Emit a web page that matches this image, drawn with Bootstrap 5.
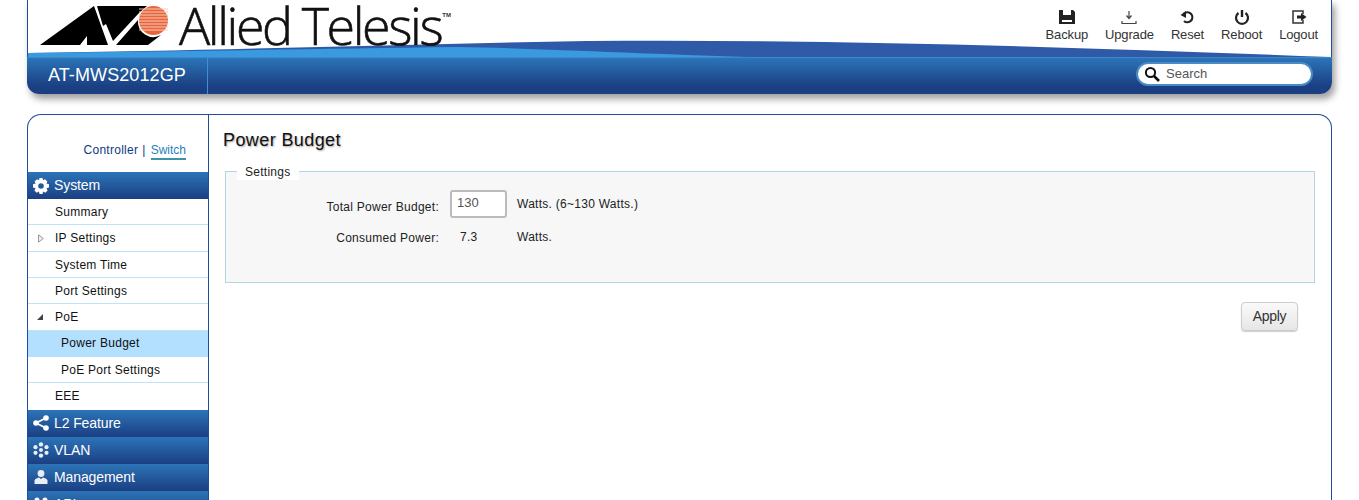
<!DOCTYPE html>
<html lang="en">
<head>
    <meta charset="UTF-8">
    <title>Power Budget</title>
    <link href="https://cdn.jsdelivr.net/npm/bootstrap@5.3.0/dist/css/bootstrap.min.css" rel="stylesheet">
    <style>
        html, body { height: 500px; overflow: hidden; }
        body { background: #fff; font-family: "Liberation Sans", Arial, sans-serif; font-size: 12px; letter-spacing: .27px; color: #222; padding: 0 27px; }
        .app-head { border-radius: 0 0 12px 12px; box-shadow: 3px 5px 7px rgba(0,0,0,.38); margin-bottom: 20px; height: 94px; }
        .head-top { height: 57px; border-left: 1px solid #1f4e9e; border-right: 1px solid #1f4e9e; position: relative; }
        .swoosh { position: absolute; left: 0; top: 0; width: 100%; height: 57px; }
        .brand { position: relative; height: 50px; padding-left: 8px; }
        .brand-name { font-family: "Open Sans", sans-serif; font-weight: 300; font-size: 52px; line-height: 50px; letter-spacing: -2.4px; color: #111; -webkit-text-stroke: .6px #111; margin-left: 9px; white-space: nowrap; }
        .brand-tm { font-size: 6px; font-weight: 700; letter-spacing: 0; margin: 11px 0 0 1px; color: #333; }
        .tools { position: relative; padding-right: 13px; gap: 17px; padding-top: 8px; }
        .tool { color: #333; font-size: 13px; line-height: 15px; letter-spacing: -.15px; text-decoration: none; text-align: center; }
        .tool svg { display: block; margin: 0 auto 1px; width: 18px; height: 18px; }
        .head-bar { height: 37px; background: linear-gradient(#2c74b8, #1a3f82 80%); border-radius: 0 0 12px 12px; border-top: 1px solid #3d88c8; }
        .model { width: 181px; height: 36px; border-right: 1px solid #3f8fd6; color: #fff; font-size: 18px; letter-spacing: .1px; line-height: 34px; padding-left: 21px; }
        .search-box { width: 177px; height: 24px; background: #fff; border: 2px solid #4a8ac6; border-radius: 12px; margin-right: 19px; padding-left: 6px; gap: 6px; color: #555; font-size: 13px; letter-spacing: 0; }
        .main-panel { height: 386px; border: 1px solid #1f4e9e; border-bottom: 0; border-radius: 14px 14px 0 0; overflow: hidden; }
        .side { width: 181px; border-right: 1px solid #1f4e9e; flex: none; }
        .zone { height: 57px; text-align: right; padding: 27px 22px 0 0; color: #0d3a80; line-height: 17px; }
        .zone-sep { margin: 0 5px 0 4px; }
        .zone a { color: #2a7fb8; letter-spacing: 0; text-decoration: none; border-bottom: 2px solid #3f93a8; padding-bottom: 1px; }
        .group-head { height: 27px; background: linear-gradient(#2c74b8, #1a3f82); color: #fff; font-size: 14px; letter-spacing: -.1px; line-height: 27px; padding-left: 5px; gap: 5px; }
        .group-head svg { width: 16px; height: 16px; flex: none; }
        .side-item { height: 26.35px; line-height: 27px; color: #111; padding-left: 27px; border-bottom: 1px solid #bfe3f7; position: relative; }
        .side-item.sub { padding-left: 33px; }
        .side-item.active { background: #b3e0ff; border-bottom-color: #b3e0ff; line-height: 25px; }
        .side-item.last { border-bottom: 0; }
        .tri-closed { position: absolute; left: 10px; top: 9px; }
        .tri-open { position: absolute; left: 9px; top: 10px; width: 0; height: 0; border-right: 6px solid #444; border-top: 6px solid transparent; }
        .content-area { padding: 0 16px; }
        .page-title { font-size: 18px; font-weight: 400; letter-spacing: .4px; color: #111; margin: 14px 0 0 -2px; line-height: 22px; text-shadow: 1px 1px 2px rgba(0,0,0,.35); }
        .settings-box { margin: 12px 0 0; height: 120px; width: 1090px; background: #f7f7f7; border: 1px solid #b5d3e6; padding: 0; position: relative; }
        .settings-box legend { float: none; width: auto; font-size: 12px; line-height: 16px; margin: -8px 0 0 11px; padding: 0 8px; background: #fff; color: #222; position: relative; top: 1px; }
        .field-row { height: 34px; }
        .field-row.second { margin-top: -1px; }
        .field-label { width: 213px; text-align: right; flex: none; color: #222; }
        .label-low { padding-top: 6px; }
        .label-nudge { padding-top: 2px; }
        .field-val { width: 57px; margin: 0 10px 0 11px; flex: none; }
        .val-text { padding-left: 10px; }
        .field-input { width: 57px; height: 28px; border: 2px solid #bbb; border-radius: 3px; background: #fff; color: #555; font-size: 13px; letter-spacing: 0; padding: 0 5px 4px; }
        .apply-row { width: 1090px; }
        .apply-btn { width: 57px; height: 29px; margin: 19px 17px 0 0; font-size: 14px; letter-spacing: -.3px; color: #333; border: 1px solid #ccc; border-radius: 4px; background: linear-gradient(#fafafa, #e6e6e6); box-shadow: 0 1px 1px rgba(0,0,0,.2); padding: 0; }
    </style>
</head>
<body>
    <div class="app-head">
        <div class="head-top">
            <svg class="swoosh" viewBox="0 0 1305 57" preserveAspectRatio="none">
                <path d="M0 53 C200 50 380 44 560 41 C800 39 1050 47 1305 57 L0 57Z" fill="#2f5aa8"/>
                <path d="M0 53 C160 51 300 49 430 47 C500 48 620 54 720 57 L0 57Z" fill="#3a9ae0"/>
            </svg>
            <div class="d-flex justify-content-between">
                <div class="brand d-flex align-items-start">
                    <svg width="134" height="46" viewBox="36 0 134 46">
                        <path d="M40 45 L94 6 L108 45 H87 V36 L80 45Z" fill="#000"/>
                        <path d="M97 6 H147 L139 13 L113 41 L106 24 L103 26Z" fill="#000"/>
                        <path d="M116 45 L138 20 A15.500 15.500 0 0 0 161 35 L148 45Z" fill="#000"/>
                        <circle cx="153.500" cy="20.500" r="14.500" fill="#e8643c"/>
                        <path d="M139 9H168M139 12H168M139 15H168M139 18H168M139 21H168M139 24H168M139 27H168M139 30H168" stroke="#f8cdb8" stroke-width="1"/>
                    </svg>
                    <span class="brand-name">Allied Telesis</span>
                    <span class="brand-tm">TM</span>
                </div>
                <div class="tools d-flex">
                    <a class="tool" href="#"><svg viewBox="0 0 18 18"><path d="M1 2H15L17 4V16H1Z" fill="#222"/><path d="M5 2H13V7H5Z M4 12H14V14H4Z" fill="#fff"/></svg>Backup</a>
                    <a class="tool" href="#"><svg viewBox="0 0 18 18"><path d="M9 3V10M6.500 7.500L9 10.500L11.500 7.500M2 13V15.500H16V13" fill="none" stroke="#444" stroke-width="1.200"/></svg>Upgrade</a>
                    <a class="tool" href="#"><svg viewBox="0 0 18 18"><path d="M6 5.500A5 5 0 1 1 6 13" fill="none" stroke="#222" stroke-width="2.200"/><path d="M2.500 7L8 3V10Z" fill="#222"/></svg>Reset</a>
                    <a class="tool" href="#"><svg viewBox="0 0 18 18"><path d="M5.500 5A6 6 0 1 0 12.500 5" fill="none" stroke="#222" stroke-width="2.200"/><path d="M9 2V9" stroke="#222" stroke-width="2.400"/></svg>Reboot</a>
                    <a class="tool" href="#"><svg viewBox="0 0 18 18"><path d="M13 6V3H3V15H13V12" fill="none" stroke="#333" stroke-width="1.500"/><path d="M7 7.500H11V5L16.500 9L11 13V10.500H7Z" fill="#222"/></svg>Logout</a>
                </div>
            </div>
        </div>
        <div class="head-bar d-flex justify-content-between align-items-start">
            <div class="model">AT-MWS2012GP</div>
            <div class="search-box d-flex align-items-center mt-1">
                <svg width="16" height="16" viewBox="0 0 16 16"><circle cx="6.500" cy="6.500" r="4.600" fill="none" stroke="#111" stroke-width="2"/><path d="M10 10L15 15" stroke="#111" stroke-width="2.600"/></svg>
                <span>Search</span>
            </div>
        </div>
    </div>

    <div class="main-panel d-flex">
        <div class="side">
            <div class="zone">Controller<span class="zone-sep">|</span><a href="#">Switch</a></div>
            <div class="group-head d-flex align-items-center">
                <svg viewBox="0 0 16 16"><path fill-rule="evenodd" d="M6.500 0H9.500L10 2.300L12 1.200L14.400 3.500L13.400 5.600L16 6.200V9.600L13.500 10.200L14.600 12.400L12.300 14.700L10.100 13.600L9.500 16H6.500L5.900 13.600L3.700 14.700L1.400 12.400L2.500 10.200L0 9.600V6.200L2.600 5.600L1.600 3.500L4 1.200L6 2.300Z M8 5.200A2.800 2.800 0 1 0 8 10.800A2.800 2.800 0 1 0 8 5.200Z" fill="#fff"/></svg>
                System
            </div>
            <div class="side-item">Summary</div>
            <div class="side-item"><svg class="tri-closed" width="6" height="9" viewBox="0 0 6 9"><path d="M.5 .8V8.200L5.300 4.500Z" fill="#eee" stroke="#999"/></svg>IP Settings</div>
            <div class="side-item">System Time</div>
            <div class="side-item">Port Settings</div>
            <div class="side-item"><i class="tri-open"></i>PoE</div>
            <div class="side-item sub active">Power Budget</div>
            <div class="side-item sub">PoE Port Settings</div>
            <div class="side-item last">EEE</div>
            <div class="group-head d-flex align-items-center">
                <svg viewBox="0 0 16 16"><path d="M13 3L3 8L13 13" fill="none" stroke="#fff" stroke-width="1.800"/><circle cx="13" cy="3" r="2.800" fill="#fff"/><circle cx="3" cy="8" r="2.800" fill="#fff"/><circle cx="13" cy="13" r="2.800" fill="#fff"/></svg>
                L2 Feature
            </div>
            <div class="group-head d-flex align-items-center">
                <svg viewBox="0 0 16 16" fill="#e8eef5"><circle cx="8" cy="8" r="2"/><circle cx="8" cy="2.400" r="2.200"/><circle cx="8" cy="13.600" r="2.200"/><circle cx="2.500" cy="5.200" r="2.100"/><circle cx="13.500" cy="5.200" r="2.100"/><circle cx="2.500" cy="10.800" r="2.100"/><circle cx="13.500" cy="10.800" r="2.100"/></svg>
                VLAN
            </div>
            <div class="group-head d-flex align-items-center">
                <svg viewBox="0 0 16 16"><circle cx="8" cy="4.500" r="3.400" fill="#e8eef5"/><path d="M1.500 15V11.500C2 9.500 4.500 9 6 8.500L8 10L10 8.500C11.500 9 14 9.500 14.500 11.500V15Z" fill="#e8eef5"/></svg>
                Management
            </div>
            <div class="group-head d-flex align-items-center">
                <svg viewBox="0 0 16 16" fill="#fff"><circle cx="4" cy="4" r="2.500"/><circle cx="12" cy="4" r="2.500"/><path d="M1 12C1 8 7 8 7 12ZM9 12C9 8 15 8 15 12Z"/></svg>
                API
            </div>
        </div>
        <div class="content-area flex-grow-1">
            <h1 class="page-title">Power Budget</h1>
            <fieldset class="settings-box">
                <legend>Settings</legend>
                <div class="field-row d-flex align-items-center mt-2">
                    <span class="field-label label-low">Total Power Budget:</span>
                    <span class="field-val"><input class="field-input" type="text" value="130"></span>
                    <span>Watts. (6~130 Watts.)</span>
                </div>
                <div class="field-row second d-flex align-items-center">
                    <span class="field-label label-nudge">Consumed Power:</span>
                    <span class="field-val val-text">7.3</span>
                    <span>Watts.</span>
                </div>
            </fieldset>
            <div class="apply-row d-flex justify-content-end">
                <button class="apply-btn" type="button">Apply</button>
            </div>
        </div>
    </div>
    <script src="https://cdn.jsdelivr.net/npm/bootstrap@5.3.0/dist/js/bootstrap.bundle.min.js"></script>
</body>
</html>
